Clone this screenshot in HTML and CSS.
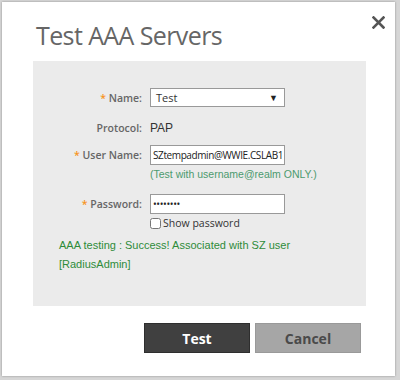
FILE: index.html
```html
<!DOCTYPE html>
<html lang="en">
<head>
  <meta charset="UTF-8">
  <title>Test AAA Servers</title>
  <link rel="stylesheet" href="styles.css">
</head>
<body>

  <div class="dialog">
    <div class="dialog-head">
      <h2>Test AAA Servers</h2>
      <svg class="close" width="13" height="13" viewBox="0 0 13 13">
        <path d="M1.5 1.5 L11.5 11.5 M11.5 1.5 L1.5 11.5" stroke="#555" stroke-width="2.6" stroke-linecap="square"/>
      </svg>
    </div>

    <div class="panel">
      <div class="form-row">
        <label><span class="req">*</span> Name:</label>
        <div class="select">
          <span>Test</span>
          <span class="caret">&#9660;</span>
        </div>
      </div>

      <div class="form-row protocol">
        <label>Protocol:</label>
        <span class="value">PAP</span>
      </div>

      <div class="form-row">
        <label><span class="req">*</span> User Name:</label>
        <div class="field">
          <input type="text" value="SZtempadmin@WWIE.CSLAB1">
          <div class="hint">(Test with username@realm ONLY.)</div>
        </div>
      </div>

      <div class="form-row password">
        <label><span class="req">*</span> Password:</label>
        <div class="field">
          <input type="password" value="password">
          <label class="check"><input type="checkbox"> Show password</label>
        </div>
      </div>

      <div class="result">AAA testing : Success! Associated with SZ user [RadiusAdmin]</div>
    </div>

    <div class="actions">
      <button class="btn primary">Test</button>
      <button class="btn">Cancel</button>
    </div>
  </div>

</body>
</html>
```

FILE: styles.css
```css
body {
  margin: 0;
  padding: 2px 5px 4px 2px;
  background: #d6d6d6;
  font-family: 'Open Sans', sans-serif;
}

.dialog {
  background: #fff;
  height: 374px;
  box-sizing: border-box;
  box-shadow: 0 0 2px rgba(0, 0, 0, 0.35);
}

.dialog-head {
  display: flex;
  justify-content: space-between;
  align-items: flex-start;
  padding: 12px 10px 0 34px;
  height: 47px;
}

.dialog-head h2 {
  margin: 4px 0 0;
  font-size: 25px;
  font-weight: normal;
  color: #666;
  letter-spacing: -0.6px;
}

.close {
  margin-top: 2px;
}

.panel {
  background: #ebebeb;
  margin: 0 29px 0 31px;
  padding: 27px 0 16px;
  height: 245px;
  box-sizing: border-box;
}

.form-row {
  display: grid;
  grid-template-columns: 109px auto;
  column-gap: 8px;
  align-items: start;
  margin-bottom: 10px;
}

.form-row > label {
  text-align: right;
  font-size: 10.5px;
  font-weight: 600;
  color: #666;
  line-height: 20px;
}

.req {
  color: #f7941d;
}

.select {
  width: 135px;
  height: 19px;
  box-sizing: border-box;
  border: 1px solid #999;
  background: #fff;
  display: flex;
  justify-content: space-between;
  align-items: center;
  padding: 0 6px 0 5px;
  font-size: 11px;
  color: #333;
}

.caret {
  font-size: 9px;
  color: #222;
}

.protocol {
  margin-bottom: 7px;
}

.protocol .value {
  font-family: 'Liberation Sans', Arial, sans-serif;
  font-size: 12px;
  color: #333;
  line-height: 20px;
}

.field input[type="text"],
.field input[type="password"] {
  width: 135px;
  height: 20px;
  box-sizing: border-box;
  border: 1px solid #999;
  padding: 0 2px;
  margin: 0;
  font-family: 'Open Sans', sans-serif;
  font-size: 10px;
  letter-spacing: -0.4px;
  color: #222;
  display: block;
}

.hint {
  font-family: 'Liberation Sans', Arial, sans-serif;
  font-size: 10.5px;
  color: #4b9a6e;
  margin-top: 2px;
  line-height: 14px;
}

.password {
  margin-top: 13px;
  margin-bottom: 6px;
}

.check {
  display: flex;
  align-items: center;
  font-size: 10.5px;
  color: #333;
  margin-top: 2px;
}

.check input {
  width: 11px;
  height: 11px;
  margin: 0 2px 0 0;
}

.result {
  font-family: 'Liberation Sans', Arial, sans-serif;
  font-size: 11px;
  line-height: 19px;
  color: #2e8b3a;
  padding: 0 40px 0 26px;
}

.actions {
  display: flex;
  justify-content: flex-end;
  gap: 5px;
  padding: 17px 34px 0 0;
}

.btn {
  width: 106px;
  height: 30px;
  border: 1px solid #999;
  background: #a6a6a6;
  color: #4a4a4a;
  font-family: 'Open Sans', sans-serif;
  font-size: 14px;
  font-weight: bold;
}

.btn.primary {
  background: #404040;
  border-color: #2e2e2e;
  color: #fff;
}
```
